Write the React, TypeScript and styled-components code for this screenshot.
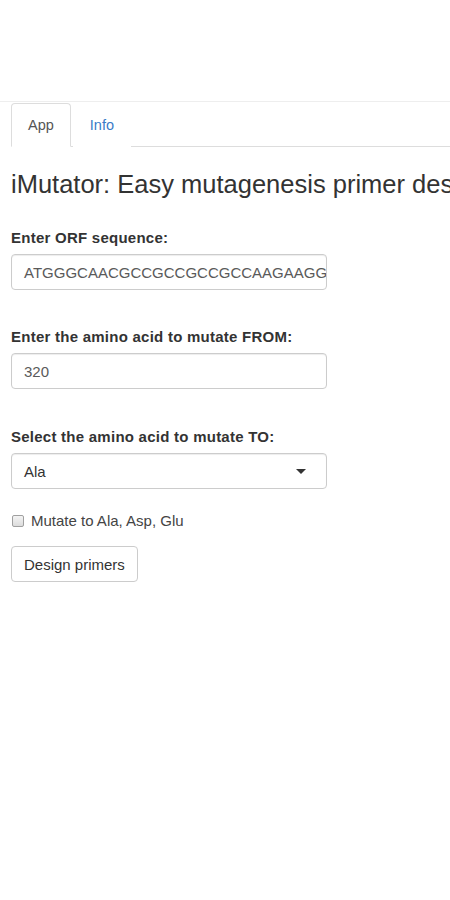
import React from "react";
import styled, { createGlobalStyle } from "styled-components";

const Global = createGlobalStyle`
  html, body { margin: 0; padding: 0; background: #fff; }
  body {
    font-family: "Liberation Sans", Arial, sans-serif;
    font-size: 15px;
    color: #333;
    overflow: hidden;
  }
  * { box-sizing: border-box; }
`;

const Page = styled.div`
  width: 450px;
  height: 900px;
  overflow: hidden;
`;

const TopBar = styled.div`
  height: 102px;
  border-bottom: 1px solid #eeeeee;
`;

const Container = styled.div`
  padding: 0 0 0 11px;
`;

const Tabs = styled.ul`
  display: flex;
  list-style: none;
  margin: 0;
  padding: 0;
  border-bottom: 1px solid #dddddd;
  height: 45px;
  align-items: flex-end;
`;

const Tab = styled.li<{ $active?: boolean }>`
  height: 44px;
  margin-right: 2px;
  margin-bottom: -1px;
  padding: 0 16px;
  display: flex;
  align-items: center;
  line-height: 20px;
  font-size: 14.5px;
  border: 1px solid ${(p) => (p.$active ? "#dddddd" : "transparent")};
  border-bottom-color: ${(p) => (p.$active ? "#fff" : "transparent")};
  border-radius: 4px 4px 0 0;
  background: #fff;
  color: ${(p) => (p.$active ? "#555" : "#3a7bc8")};
`;

const Title = styled.h3`
  margin: 23px 0 0 0;
  font-weight: 400;
  font-size: 25.5px;
  line-height: 28px;
  white-space: nowrap;
  color: #333;
`;

const Group = styled.div<{ $top: number }>`
  margin-top: ${(p) => p.$top}px;
  width: 316px;
`;

const Label = styled.label`
  display: block;
  font-weight: 700;
  font-size: 15px;
  letter-spacing: 0.25px;
  line-height: 20px;
  margin-bottom: 6px;
  white-space: nowrap;
`;

const TextInput = styled.div`
  height: 36px;
  width: 100%;
  border: 1px solid #cccccc;
  border-radius: 4px;
  padding: 0 12px;
  display: flex;
  align-items: center;
  color: #5a5a5a;
  font-size: 15px;
  overflow: hidden;
  white-space: nowrap;
  box-shadow: inset 0 1px 1px rgba(0, 0, 0, 0.075);
`;

const SelectBox = styled(TextInput)`
  justify-content: space-between;
  color: #333;
  padding-right: 20px;
`;

const Caret = styled.span`
  width: 0;
  height: 0;
  border-left: 5px solid transparent;
  border-right: 5px solid transparent;
  border-top: 5px solid #333;
`;

const CheckRow = styled.label`
  display: flex;
  align-items: center;
  gap: 7px;
  margin-top: 22px;
  line-height: 20px;
  font-size: 15px;
  color: #444;
  padding-left: 1px;
`;

const Box = styled.span`
  width: 12px;
  height: 12px;
  border: 1px solid #a0a0a0;
  border-radius: 2px;
  background: linear-gradient(#f4f4f4, #dcdcdc);
`;

const Button = styled.button`
  margin-top: 15px;
  height: 36px;
  padding: 0 12px;
  font-family: inherit;
  font-size: 15px;
  color: #333;
  background: #fff;
  border: 1px solid #cccccc;
  border-radius: 4px;
  text-align: left;
`;

export default function App() {
  return (
    <Page>
      <Global />
      <TopBar />
      <Container>
        <Tabs>
          <Tab $active>App</Tab>
          <Tab>Info</Tab>
        </Tabs>
        <Title>iMutator: Easy mutagenesis primer design</Title>
        <Group $top={30}>
          <Label>Enter ORF sequence:</Label>
          <TextInput>ATGGGCAACGCCGCCGCCGCCAAGAAGGCGGCCACCGGC</TextInput>
        </Group>
        <Group $top={37}>
          <Label>Enter the amino acid to mutate FROM:</Label>
          <TextInput>320</TextInput>
        </Group>
        <Group $top={38}>
          <Label>Select the amino acid to mutate TO:</Label>
          <SelectBox>
            <span>Ala</span>
            <Caret />
          </SelectBox>
        </Group>
        <CheckRow>
          <Box />
          Mutate to Ala, Asp, Glu
        </CheckRow>
        <Button>Design primers</Button>
      </Container>
    </Page>
  );
}
